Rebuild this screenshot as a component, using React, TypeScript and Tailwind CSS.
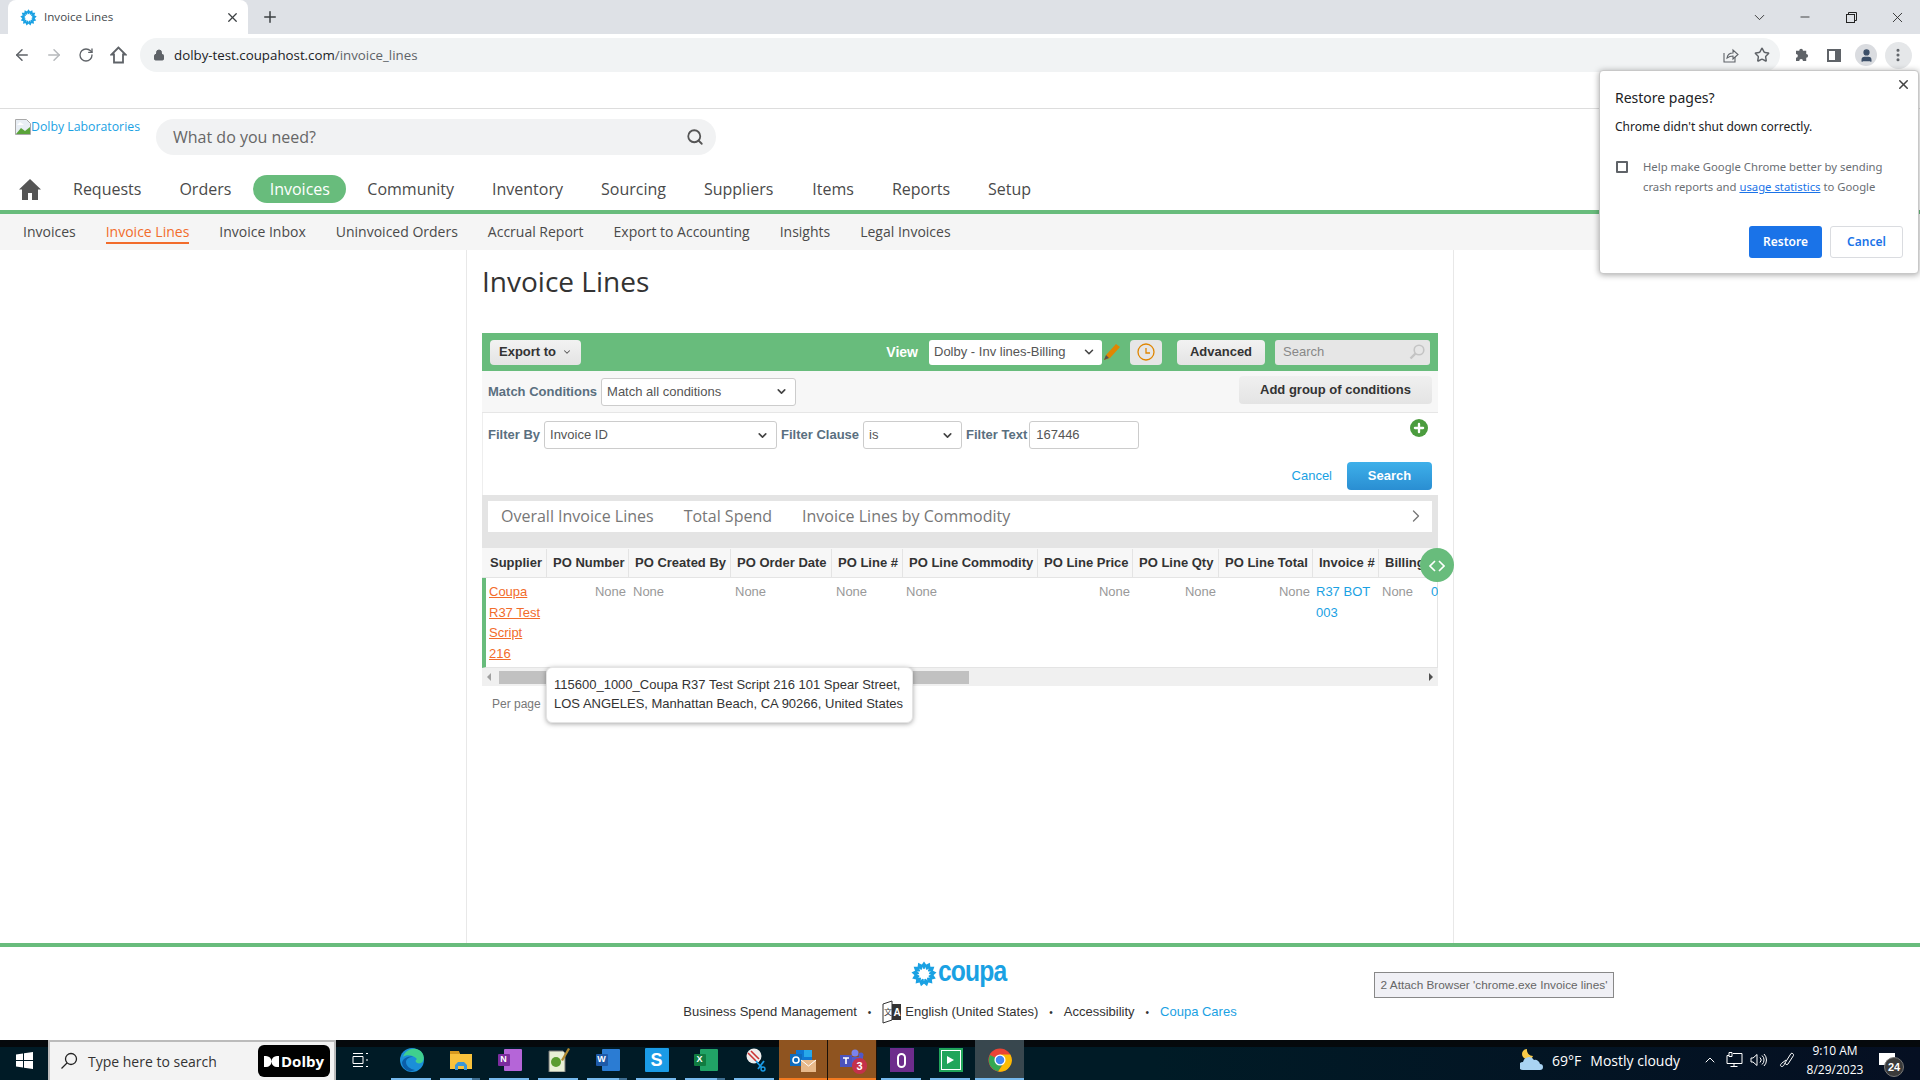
import React from "react";
import { ArrowLeft, ArrowRight, RotateCw, Lock, X, Plus, ChevronDown, Minus, Star, User, MoreVertical, Search, ChevronRight, ChevronUp } from "lucide-react";

const OS = { fontFamily: '"Open Sans", "Noto Sans", sans-serif' };
const AR = { fontFamily: '"Liberation Sans", Arial, sans-serif' };

const Burst = ({ size = 16 }: { size?: number }) => (
  <svg width={size} height={size} viewBox="0 0 32 32">
    {Array.from({ length: 13 }).map((_, i) => (
      <path key={i} d="M16 0.5 L19.5 5.5 L16.8 9.5 L16 10 L15.2 9.5 L12.5 5.5 Z" fill="#1aa1e3" transform={`rotate(${(i * 360) / 13} 16 16)`} />
    ))}
  </svg>
);

const Sel = ({ text, w }: { text: string; w: string }) => (
  <div className={`${w} h-7 flex items-center justify-between bg-white border border-[#ccc] rounded-[3px] pl-[5px] pr-[7px] text-[13px] text-[#555]`}>
    <span>{text}</span>
    <ChevronDown size={13} strokeWidth={3} className="text-[#444]" />
  </div>
);

const cols: [string, string][] = [
  ["Supplier", "w-[63px]"], ["PO Number", "w-[82px]"], ["PO Created By", "w-[102px]"], ["PO Order Date", "w-[101px]"], ["PO Line #", "w-[71px]"],
  ["PO Line Commodity", "w-[135px]"], ["PO Line Price", "w-[95px]"], ["PO Line Qty", "w-[86px]"], ["PO Line Total", "w-[94px]"], ["Invoice #", "w-[66px]"], ["Billing", "w-[59px]"],
];

const TB = ({ children, active, hl, stack }: { children: React.ReactNode; active?: boolean; hl?: boolean; stack?: boolean }) => (
  <div className={`relative w-[49px] h-10 flex items-center justify-center ${hl ? "bg-[#8f5420] border-r border-[#1a1008]" : active ? "bg-[#38474e]" : ""}`}>
    {children}
    <div className={`absolute bottom-0 h-[2px] ${hl || active ? "left-0 right-0" : "left-[4px] right-[5px]"} ${hl ? "bg-[#f47a20]" : "bg-[#76b9ed]"}`} />
    {stack && <div className="absolute bottom-0 right-[5px] w-[8px] h-[2px] bg-[#3f6f92]" />}
  </div>
);

const Tile = ({ back, front, t }: { back: string; front: string; t: string }) => (
  <div className="relative w-6 h-[22px]">
    <div className={`absolute right-0 top-0 w-[18px] h-[22px] ${back} rounded-[1px]`} />
    <div className={`absolute left-0 top-[5px] w-[12px] h-[12px] ${front} text-white text-[9px] font-bold flex items-center justify-center rounded-[1px]`} style={AR}>{t}</div>
  </div>
);

const nav: [string, boolean, number][] = [
  ["Requests", false, 38], ["Orders", false, 22], ["Invoices", true, 21], ["Community", false, 38], ["Inventory", false, 38],
  ["Sourcing", false, 38], ["Suppliers", false, 39], ["Items", false, 38], ["Reports", false, 38], ["Setup", false, 0],
];

export default function App() {
  return (
    <div className="relative w-[1920px] h-[1080px] overflow-hidden flex flex-col bg-white" style={OS}>
      {/* Tab strip */}
      <div className="h-[34px] shrink-0 bg-[#dee1e6] flex items-end pl-[8px] text-[#3c4043]">
        <div className="w-[240px] h-[34px] bg-white rounded-t-[8px] flex items-center pl-[12px] pr-[8px]">
          <Burst size={17} />
          <span className="ml-[7px] text-[11.6px] flex-1 text-[#45494d]">Invoice Lines</span>
          <X size={15} strokeWidth={2} />
        </div>
        <div className="ml-[13px] h-[34px] flex items-center"><Plus size={18} strokeWidth={2} /></div>
        <div className="flex-1 h-[34px] flex items-center justify-end text-[#222]">
          <div className="w-[46px] flex justify-center"><ChevronDown size={17} strokeWidth={1.2} /></div>
          <div className="w-[46px] flex justify-center"><Minus size={14} strokeWidth={1.4} /></div>
          <div className="w-[46px] flex justify-center">
            <svg width="11" height="11" viewBox="0 0 11 11" fill="none" stroke="#222" strokeWidth="1"><rect x="0.5" y="2.5" width="8" height="8" /><path d="M2.5 2.5v-2h8v8h-2" /></svg>
          </div>
          <div className="w-[46px] flex justify-center"><X size={17} strokeWidth={1.2} /></div>
        </div>
      </div>
      {/* Toolbar */}
      <div className="h-[75px] shrink-0 border-b border-[#ddd] bg-white">
        <div className="h-[38px] pt-[4px] flex items-center text-[#5f6368]">
          <div className="flex items-center pl-[6px] w-[140px]">
            <div className="w-[32px] flex justify-center"><ArrowLeft size={18} strokeWidth={2} /></div>
            <div className="w-[32px] flex justify-center"><ArrowRight size={18} strokeWidth={2} className="text-[#b6b9bc]" /></div>
            <div className="w-[32px] flex justify-center"><RotateCw size={16} strokeWidth={2} /></div>
            <div className="w-[32px] flex justify-center">
              <svg width="17" height="18" viewBox="0 0 17 18" fill="none" stroke="#5f6368" strokeWidth="1.8"><path d="M8.5 1.5L1.5 8.5h2.5v8h9v-8h2.5z" strokeLinejoin="miter" /></svg>
            </div>
          </div>
          <div className="w-[1640px] h-[34px] rounded-full bg-[#f1f3f4] flex items-center pl-[13px] pr-[10px]">
            <Lock size={12} fill="#5f6368" strokeWidth={2} />
            <span className="ml-[9px] pt-[1px] text-[13.3px] text-[#202124]">dolby-test.coupahost.com<span className="text-[#5f6368]">/invoice_lines</span></span>
            <div className="flex-1" />
            <svg width="16" height="15" viewBox="0 0 16 15" fill="none" stroke="#5f6368" strokeWidth="1.1" className="mr-[15px]"><path d="M1 5v9h11V9" /><path d="M4 10c.5-3 3-5 6-5V2l5 4.5L10 11V8c-2 0-4 .5-6 2z" /></svg>
            <Star size={16} strokeWidth={2.2} />
          </div>
          <div className="flex items-center ml-[6px]">
            <div className="w-[32px] flex justify-center">
              <svg width="15" height="15" viewBox="0 0 15 15" fill="#5f6368"><path d="M0 4h3.5a2 2 0 014 0H11v3.5a2 2 0 010 4V15H7.5a2 2 0 00-4 0H0v-3.5a2 2 0 000-4z" transform="translate(1 -1) scale(.93)" /></svg>
            </div>
            <div className="w-[32px] flex justify-center">
              <svg width="14" height="13" viewBox="0 0 14 13"><path d="M0 0h14v13H0z" fill="#5f6368" /><path d="M2 2h6v9H2z" fill="#fff" /></svg>
            </div>
            <div className="w-[32px] flex justify-center">
              <div className="w-[22px] h-[22px] rounded-full bg-[#dadce0] flex items-center justify-center"><User size={15} fill="#3c4f68" className="text-[#3c4f68]" /></div>
            </div>
            <div className="w-[32px] flex justify-center">
              <div className="w-[27px] h-[27px] rounded-full bg-[#e5e7e9] flex items-center justify-center"><MoreVertical size={16} strokeWidth={2.6} /></div>
            </div>
          </div>
        </div>
      </div>
      {/* App header */}
      <div className="h-[66px] shrink-0 flex pl-[15px] pt-[10px]">
        <div className="w-[141px] flex items-start text-[12.3px] text-[#1aa1e3] leading-[16px]">
          <svg width="16" height="16" viewBox="0 0 16 16" className="shrink-0"><path d="M.5.5h11l4 4v11H.5z" fill="#e8eef5" stroke="#a9a9a9" /><path d="M1 15l5-6 4 3 5-4v7z" fill="#5aa33a" /><path d="M2 6l3-3 4 3z" fill="#fff" /></svg>
          <span>Dolby Laboratories</span>
        </div>
        <div className="w-[560px] h-[36px] rounded-full bg-[#f1f2f3] flex items-center justify-between pl-[17px] pr-[12px] text-[16px] text-[#666] pb-[1px]">
          <span>What do you need?</span>
          <Search size={18} strokeWidth={2.4} className="text-[#555]" />
        </div>
      </div>
      {/* Nav */}
      <div className="h-[35px] shrink-0 flex items-start pl-[19px] text-[16px] text-[#4a4a4a]">
        <div className="h-[28px] w-[54px] flex items-center">
          <svg width="22" height="21" viewBox="0 0 22 21" fill="#555"><path d="M11 0L0 10.5h3V21h6v-7h4v7h6V10.5h3z" /></svg>
        </div>
        {nav.map(([t, a, m]) => (
          <div key={t} className={`h-[28px] flex items-center justify-center rounded-full ${a ? "bg-[#68bc7c] text-white w-[93px]" : ""}`} style={{ marginRight: m }}>
            {t}
          </div>
        ))}
      </div>
      <div className="h-[4px] shrink-0 bg-[#68bc7c]" />
      {/* Sub nav */}
      <div className="h-[36px] shrink-0 bg-[#f5f5f5] flex items-center pl-[23px] pb-[1px] gap-[30px] text-[14px] text-[#4a4a4a]">
        {["Invoices", "Invoice Lines", "Invoice Inbox", "Uninvoiced Orders", "Accrual Report", "Export to Accounting", "Insights", "Legal Invoices"].map((t) => (
          <span key={t} className={t === "Invoice Lines" ? "text-[#f26c2b] border-b-2 border-[#f26c2b] leading-[21px] mt-[2px]" : ""}>{t}</span>
        ))}
      </div>
      {/* Main */}
      <div className="flex-1 min-h-0 flex justify-center">
        <div className="w-[988px] border-x border-[#e8e8e8] pt-[12px] px-[15px] text-[13px]" style={AR}>
          <h1 className="text-[28px] leading-[38px] text-[#333] mb-[33px]" style={OS}>Invoice Lines</h1>
          {/* Green bar */}
          <div className="w-[956px] h-[38px] bg-[#68bc7c] flex items-center pl-[8px] pr-[8px]">
            <div className="h-[25px] w-[91px] rounded-[4px] bg-gradient-to-b from-[#f2f2f2] to-[#e4e4e4] flex items-center pl-[9px] text-[13px] font-bold text-[#333]">Export to<ChevronDown size={10} strokeWidth={2.5} className="ml-[6px] text-[#555]" /></div>
            <div className="flex-1" />
            <span className="text-[14px] font-bold text-white mr-[11px]">View</span>
            <div className="w-[173px] h-[25px] bg-white rounded-[3px] flex items-center justify-between pl-[5px] pr-[6px] text-[13px] text-[#555]">Dolby - Inv lines-Billing<ChevronDown size={14} strokeWidth={2.6} className="text-[#444]" /></div>
            <svg width="18" height="18" viewBox="0 0 18 18" className="ml-[1px]"><path d="M1 17l2-5L13 1l4 3-10 11z" fill="#e08600" /><path d="M1 17l2-5 3 3z" fill="#555" /></svg>
            <div className="ml-[9px] w-[32px] h-[25px] rounded-[4px] bg-[#e6e6e6] flex items-center justify-center">
              <svg width="18" height="18" viewBox="0 0 18 18" fill="none" stroke="#e08600" strokeWidth="1.3"><circle cx="9" cy="9" r="8" /><path d="M9 5v5h4" /></svg>
            </div>
            <div className="ml-[15px] w-[88px] h-[25px] rounded-[4px] bg-gradient-to-b from-[#f2f2f2] to-[#e4e4e4] flex items-center justify-center text-[13px] font-bold text-[#333]">Advanced</div>
            <div className="ml-[10px] w-[155px] h-[25px] rounded-[3px] bg-[#e6e6e6] flex items-center justify-between pl-[8px] pr-[5px] text-[13px] text-[#888]">Search
              <svg width="16" height="16" viewBox="0 0 16 16" fill="none" stroke="#c4c4c4" strokeWidth="1.6"><circle cx="10" cy="6" r="4.8" /><path d="M6.5 9.5L1.5 14.5" strokeWidth="2.4" /></svg>
            </div>
          </div>
          {/* Match row */}
          <div className="w-[956px] h-[42px] bg-[#f7f7f7] border-b border-[#e6e6e6] flex items-center pl-[6px] pr-[6px]">
            <span className="text-[13px] font-bold text-[#5a6f80] mr-[4px]">Match Conditions</span>
            <Sel text="Match all conditions" w="w-[195px]" />
            <div className="flex-1" />
            <div className="w-[193px] h-[28px] -mt-[3px] rounded-[4px] bg-gradient-to-b from-[#f0f0f0] to-[#e4e4e4] flex items-center justify-center text-[13px] font-bold text-[#333]">Add group of conditions</div>
          </div>
          {/* Filter */}
          <div className="w-[956px] h-[82px] bg-white border-l border-[#eee] relative">
            <div className="flex items-center pl-[5px] pt-[8px] gap-[4px]">
              <span className="text-[13px] font-bold text-[#5a6f80]">Filter By</span>
              <Sel text="Invoice ID" w="w-[233px]" />
              <span className="text-[13px] font-bold text-[#5a6f80]">Filter Clause</span>
              <Sel text="is" w="w-[99px]" />
              <span className="text-[13px] font-bold text-[#5a6f80]">Filter Text</span>
              <div className="w-[110px] h-7 -ml-[2px] bg-white border border-[#ccc] rounded-[3px] flex items-center pl-[6px] text-[13px] text-[#555]">167446</div>
            </div>
            <div className="absolute left-[927px] top-[6px] w-[18px] h-[18px] rounded-full bg-[#4b9c3e] flex items-center justify-center"><Plus size={14} strokeWidth={4} className="text-white" /></div>
            <div className="absolute right-[6px] top-[49px] flex items-center gap-[15px]">
              <span className="text-[#1aa1e3] text-[13px]">Cancel</span>
              <div className="w-[85px] h-[28px] rounded-[4px] bg-gradient-to-b from-[#3eb0ea] to-[#2a8ed2] text-white text-[13px] font-bold flex items-center justify-center">Search</div>
            </div>
          </div>
          {/* Tabs */}
          <div className="w-[956px] h-[53px] bg-[#e4e4e4] pt-[6px] pl-[6px]">
            <div className="w-[944px] h-[31px] bg-white flex items-center pl-[13px] pr-[6px] pb-[2px] text-[16px] text-[#777] gap-[30px]" style={OS}>
              <span>Overall Invoice Lines</span><span>Total Spend</span><span>Invoice Lines by Commodity</span>
              <div className="flex-1" />
              <ChevronRight size={20} strokeWidth={1.6} />
            </div>
          </div>
          {/* Table */}
          <div className="w-[956px] overflow-hidden">
            <div className="flex h-[30px] pl-[2px] pt-[1px] bg-[#f7f7f7] border-b border-[#e4e4e4]">
              {cols.map(([t, w]) => (
                <div key={t} className={`${w} shrink-0 border-r border-[#e4e4e4] pl-[6px] flex items-center text-[13px] font-bold text-[#333] whitespace-nowrap`}>{t}</div>
              ))}
            </div>
            <div className="flex h-[90px] border-l-4 border-[#68bc7c] border-b border-r border-b-[#e4e4e4] border-r-[#e4e4e4] pt-[4px] text-[13px] leading-[20.7px] text-[#999]">
              <div className="w-[61px] shrink-0 pl-[3px] text-[#f26c2b] underline">Coupa<br />R37 Test<br />Script<br />216</div>
              <div className="w-[82px] shrink-0 text-right pr-[3px]">None</div>
              <div className="w-[102px] shrink-0 pl-[4px]">None</div>
              <div className="w-[101px] shrink-0 pl-[4px]">None</div>
              <div className="w-[71px] shrink-0 pl-[4px]">None</div>
              <div className="w-[135px] shrink-0 pl-[3px]">None</div>
              <div className="w-[95px] shrink-0 text-right pr-[3px]">None</div>
              <div className="w-[86px] shrink-0 text-right pr-[3px]">None</div>
              <div className="w-[94px] shrink-0 text-right pr-[3px]">None</div>
              <div className="w-[66px] shrink-0 pl-[3px] text-[#1aa1e3]">R37 BOT<br />003</div>
              <div className="w-[51px] shrink-0 pl-[3px]">None</div>
              <div className="text-[#1aa1e3] pl-[1px]">0</div>
            </div>
            <div className="h-[18px] bg-[#f0f0f0] flex items-center pl-[5px] pr-[5px]">
              <div className="w-0 h-0 border-y-[4px] border-y-transparent border-r-[4px] border-r-[#a0a0a0]" />
              <div className="ml-[8px] w-[470px] h-[13px] bg-[#c1c1c1]" />
              <div className="flex-1" />
              <div className="w-0 h-0 border-y-[4px] border-y-transparent border-l-[4px] border-l-[#505050]" />
            </div>
          </div>
          <div className="pl-[10px] pt-[9px] text-[12px] text-[#777]">Per page</div>
        </div>
      </div>
      {/* Footer */}
      <div className="h-[97px] shrink-0 border-t-4 border-[#68bc7c] relative flex flex-col items-center" style={AR}>
        <div className="h-[50px] flex items-center pt-[3px] pr-[2px]">
          <Burst size={26} />
          <span className="inline-block origin-left scale-x-[0.85] -mr-[12px] ml-[1px] text-[#1aa1e3] text-[29px] font-bold leading-[30px] -mt-[5px] tracking-[-1px]">coupa</span>
        </div>
        <div className="flex items-center text-[13px] text-[#333] h-[24px] mt-[3px]">
          <span>Business Spend Management</span><span className="mx-[11px] text-[10px]">•</span>
          <svg width="20" height="24" viewBox="0 0 20 24" className="mr-[3px]"><path d="M1 4l9-3v19l-9 3z" fill="#fff" stroke="#333" /><path d="M10 4h9v16h-9z" fill="#333" /><text x="11.5" y="16" fontSize="10" fontWeight="700" fill="#fff" fontFamily="Liberation Sans">A</text><text x="2" y="15" fontSize="8" fill="#333" fontFamily="Noto Sans CJK SC">文</text></svg>
          <span>English (United States)</span><span className="mx-[11px] text-[10px]">•</span>
          <span>Accessibility</span><span className="mx-[11px] text-[10px]">•</span>
          <span className="text-[#1aa1e3]">Coupa Cares</span>
        </div>
      </div>
      {/* Taskbar */}
      <div className="h-[40px] shrink-0 bg-[linear-gradient(#05090c_7px,transparent_7px),linear-gradient(90deg,#001b26_60%,#050f22_100%)] flex items-center text-white relative">
        <div className="w-[48px] flex justify-center">
          <svg width="17" height="17" viewBox="0 0 17 17" fill="#fff"><path d="M0 2.5l7-1v6.5H0zM8 1.3L17 0v8H8zM0 9h7v6.5l-7-1zM8 9h9v8l-9-1.3z" /></svg>
        </div>
        <div className="w-[288px] h-[40px] bg-[#f3f3f3] flex items-center pl-[10px] pr-[4px] text-[14px] text-[#333] border-x-2 border-t-2 border-[#bbb]">
          <svg width="18" height="18" viewBox="0 0 18 18" fill="none" stroke="#222" strokeWidth="1.3"><circle cx="11" cy="7" r="5.5" /><path d="M7 11L1.5 16.5" /></svg>
          <span className="ml-[10px] flex-1">Type here to search</span>
          <div className="w-[72px] h-[32px] bg-black rounded-[6px] flex items-center justify-center text-white text-[15px] font-bold gap-[2px]">
            <svg width="15" height="11" viewBox="0 0 15 11" fill="#fff"><path d="M0 0h2a5.5 5.5 0 010 11H0zM15 0h-2a5.5 5.5 0 000 11h2z" /></svg>Dolby
          </div>
        </div>
        <div className="w-[51px] pr-[3px] flex justify-center">
          <svg width="16" height="16" viewBox="0 0 16 16" fill="none" stroke="#fff"><path d="M1 1.5h10M1 14.5h10M1 4.5h10v7H1z" /><path d="M14 1.5h2M14 8h2M14 14.5h2" /></svg>
        </div>
        <div className="flex">
          <TB><svg width="24" height="24" viewBox="0 0 24 24"><circle cx="12" cy="12" r="12" fill="#1b8fd8" /><path d="M3 9C5 2 13-1 19 2c4 2 6 7 4 11-1 3-6 3-7 1-1-1 0-2 1-3-3-4-11-5-14-2z" fill="#3fcf8e" /><path d="M6 14c0 4 4 7 9 8-5 3-12 0-13-7 0-3 5-8 11-6-4 0-7 2-7 5z" fill="#0b5ea8" /></svg></TB>
          <TB stack><svg width="24" height="24" viewBox="0 0 24 24"><path d="M1 3h8l2 3h12v15H1z" fill="#f9c23c" /><path d="M1 3h9l1 3H1z" fill="#d79a1f" /><path d="M6 22v-5l3-3h6l3 3v5h-3v-4H9v4z" fill="#3b96d6" /></svg></TB>
          <TB><Tile back="bg-[#b565d8]" front="bg-[#7c2c9e]" t="N" /></TB>
          <TB><svg width="24" height="24" viewBox="0 0 24 24"><path d="M2 3h14l2 2v19H2z" fill="#e8f0d6" stroke="#777" /><circle cx="9" cy="14" r="5" fill="#5a9c30" /><path d="M21 0l2 1-7 12-2-1z" fill="#b08a30" /></svg></TB>
          <TB stack><Tile back="bg-[#2b7cd3]" front="bg-[#1e5aa8]" t="W" /></TB>
          <TB><div className="w-[24px] h-[24px] bg-[#1a9be6] text-white rounded-[1px] flex items-center justify-center text-[18px] font-bold" style={AR}>S</div></TB>
          <TB stack><Tile back="bg-[#21a366]" front="bg-[#107c41]" t="X" /></TB>
          <TB><svg width="24" height="24" viewBox="0 0 24 24"><circle cx="11" cy="8" r="7.5" fill="#eee" /><path d="M5 5l8 8M8 3l8 8" stroke="#c33" strokeWidth="1.6" /><path d="M13 13l6 7M21 13l-6 8" stroke="#1a9be6" strokeWidth="1.8" fill="none" /><circle cx="20" cy="21" r="2" fill="none" stroke="#1a9be6" strokeWidth="1.4" /></svg></TB>
          <TB hl><svg width="26" height="24" viewBox="0 0 26 24"><path d="M6 2h16v14H6z" fill="#0f78d4" /><path d="M14 2h8v7h-8z" fill="#28a8ea" /><path d="M0 6h12v12H0z" fill="#0f6cbd" /><circle cx="6" cy="12" r="3" fill="none" stroke="#fff" strokeWidth="1.6" /><path d="M11 12h15v12H11z" fill="#e8b98a" /><path d="M11 12l7.5 6 7.5-6" fill="none" stroke="#fff" strokeWidth="1" /></svg></TB>
          <TB hl><div className="relative"><svg width="24" height="22" viewBox="0 0 24 22"><circle cx="15" cy="4" r="3.5" fill="#7b83eb" /><circle cx="21" cy="6" r="2.5" fill="#5059c9" /><path d="M9 8h14v9H9z" fill="#5059c9" /><path d="M0 6h12v12H0z" fill="#4b53bc" /><path d="M3 9h6M6 9v6" stroke="#fff" strokeWidth="1.6" /></svg><div className="absolute -right-[3px] -bottom-[3px] w-[15px] h-[16px] rounded-full bg-[#c4314b] text-[11px] font-bold flex items-center justify-center" style={AR}>3</div></div></TB>
          <TB><div className="w-[24px] h-[24px] bg-[#6d2c8c] flex items-center justify-center"><div className="w-[9px] h-[15px] border-2 border-white rounded-full" /></div></TB>
          <TB><div className="w-[24px] h-[24px] bg-[#21a55a] p-[2px]"><div className="w-full h-full bg-white p-[1px]"><div className="w-full h-full bg-[#21a55a] flex items-center justify-center"><div className="w-0 h-0 border-y-[4px] border-y-transparent border-l-[7px] border-l-white" /></div></div></div></TB>
          <TB active><svg width="24" height="24" viewBox="0 0 26 26"><circle cx="13" cy="13" r="12.5" fill="#ea4335" /><path d="M13 13L2.2 7.5A12.5 12.5 0 0011 25.4l5-8z" fill="#34a853" /><path d="M13 7h11.2A12.5 12.5 0 0111 25.4l6-9z" fill="#fbbc04" /><circle cx="13" cy="13" r="6" fill="#fff" /><circle cx="13" cy="13" r="4.6" fill="#4285f4" /></svg></TB>
        </div>
        <div className="flex-1" />
        <svg width="24" height="22" viewBox="0 0 24 22" className="mr-[8px]"><path d="M7 0a6 6 0 006 7 5 5 0 01-6 3A5 5 0 017 0z" fill="#f7c948" /><path d="M3 21a4 4 0 010-8 6 6 0 0111-2 5 5 0 016 4 3 3 0 010 6z" fill="#a9d3f2" /></svg>
        <span className="text-[14px]">69°F</span><span className="ml-[9px] text-[14px] mr-[18px]">Mostly cloudy</span>
        <div className="w-[24px] flex justify-center"><ChevronUp size={16} strokeWidth={1.5} /></div>
        <div className="w-[25px] flex justify-center">
          <svg width="17" height="16" viewBox="0 0 17 16" fill="none" stroke="#fff"><path d="M3 3.5H1v8h15v-10H7" /><path d="M8 12v2.5M4.5 14.5h7" /><path d="M3 .5h3v4H3z" /></svg>
        </div>
        <div className="w-[22px] flex justify-center">
          <svg width="17" height="14" viewBox="0 0 17 14" fill="none" stroke="#fff"><path d="M1 5v4h2l4 3.5v-11L3 5z" /><path d="M10 4.5a3.5 3.5 0 010 5M12 2.5a6 6 0 010 9M14 1a8.5 8.5 0 010 12" /></svg>
        </div>
        <div className="w-[36px] flex justify-center">
          <svg width="16" height="16" viewBox="0 0 16 16" fill="none" stroke="#fff"><path d="M6 11L12 1.5c1-.8 3 .5 2.5 2L9 12c-1 1.5-3 0-3-1z" /><path d="M7 8L3 11c-2 1.5-2 3.5 0 3.5 1 0 2-1 3-3.5" /></svg>
        </div>
        <div className="flex flex-col items-center text-[12px] leading-[19px] w-[60px]"><span>9:10 AM</span><span>8/29/2023</span></div>
        <div className="relative w-[55px] h-[40px]">
          <svg width="16" height="12" viewBox="0 0 16 12" fill="#fff" className="absolute left-[14px] top-[13px]"><path d="M0 0h16v12H0z" /></svg>
          <div className="absolute left-[19px] top-[17px] w-[20px] h-[20px] rounded-full bg-[#3a3a3a] border border-[#777] text-[11px] font-bold flex items-center justify-center" style={AR}>24</div>
        </div>
      </div>

      {/* Tooltip */}
      <div className="absolute left-[546px] top-[667px] w-[367px] h-[56px] bg-white border border-[#e4e4e4] rounded-[6px] shadow-[0_1px_5px_rgba(0,0,0,0.35)] pl-[7px] pt-[7px] text-[13px] leading-[19px] text-[#333] whitespace-nowrap" style={AR}>
        115600_1000_Coupa R37 Test Script 216 101 Spear Street,<br />LOS ANGELES, Manhattan Beach, CA 90266, United States
      </div>
      {/* Round toggle */}
      <div className="absolute left-[1420px] top-[548px] w-[34px] h-[34px] rounded-full bg-[#68bc7c] flex items-center justify-center pt-[1px]">
        <svg width="16" height="12" viewBox="0 0 16 12" fill="none" stroke="#fff" strokeWidth="1.6"><path d="M6 1L1 6l5 5M10 1l5 5-5 5" /></svg>
      </div>
      {/* Attach box */}
      <div className="absolute left-[1374px] top-[972px] w-[240px] h-[26px] bg-[#f0f0f5] border border-[#888] flex items-center justify-center pt-[1px] text-[11.8px] text-[#666]" style={AR}>2 Attach Browser 'chrome.exe Invoice lines'</div>
      {/* Restore popover */}
      <div className="absolute left-[1599px] top-[70px] w-[320px] h-[204px] bg-white border border-[#c8c8c8] rounded-[4px] shadow-[0_1px_6px_rgba(0,0,0,0.35)] pl-[15px] text-[#202124]" style={{ fontFamily: '"Noto Sans", sans-serif' }}>
        <X size={15} strokeWidth={2.4} className="absolute right-[7px] top-[6px] text-[#444]" />
        <div className="pt-[17px] text-[14px] leading-[20px]">Restore pages?</div>
        <div className="pt-[9px] text-[12px] leading-[20px]">Chrome didn't shut down correctly.</div>
        <div className="flex pt-[20px]">
          <div className="w-[12px] h-[12px] border-2 border-[#5f6368] rounded-[1px] mt-[4px] ml-[1px]" />
          <div className="ml-[15px] text-[11.3px] leading-[20px] text-[#6a6e73] whitespace-nowrap">Help make Google Chrome better by sending<br />crash reports and <span className="text-[#1a73e8] underline">usage statistics</span> to Google</div>
        </div>
        <div className="absolute right-[15px] top-[155px] flex gap-[8px] text-[12px] font-semibold">
          <div className="w-[73px] h-[32px] rounded-[3px] bg-[#1a73e8] text-white flex items-center justify-center">Restore</div>
          <div className="w-[73px] h-[32px] rounded-[3px] border border-[#dadce0] text-[#1a73e8] flex items-center justify-center">Cancel</div>
        </div>
      </div>
    </div>
  );
}
